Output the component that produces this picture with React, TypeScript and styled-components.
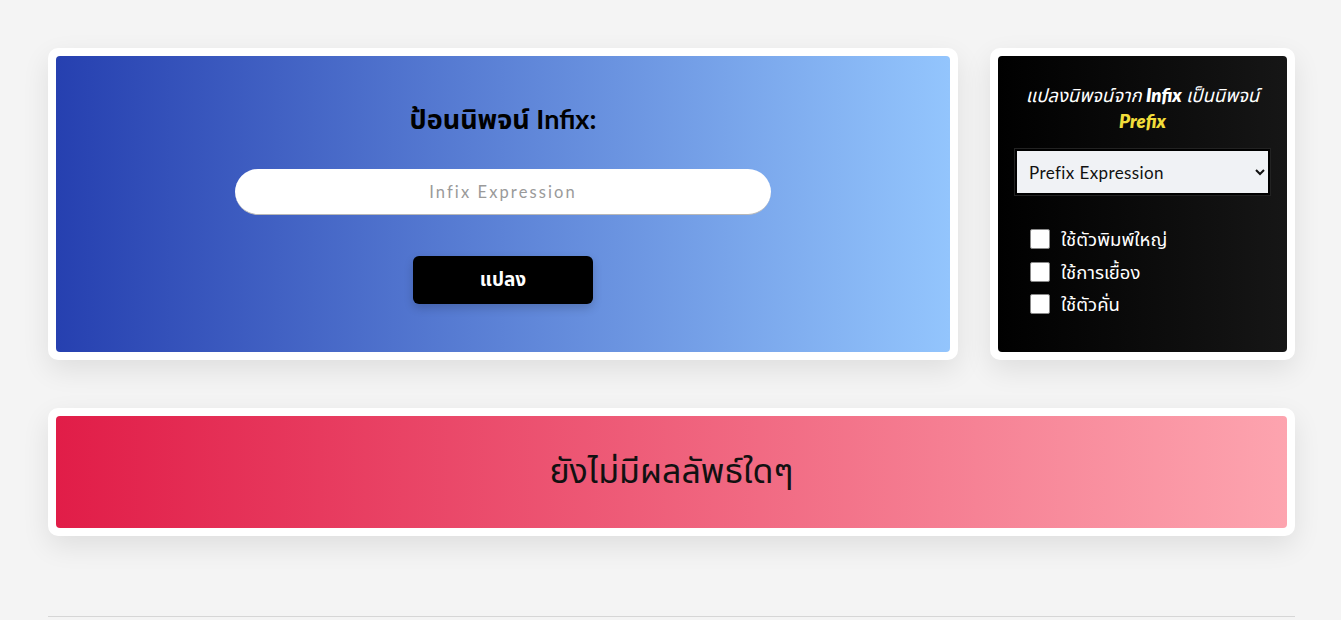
import React, { useState } from 'react';
import styled, { createGlobalStyle } from 'styled-components';

const FONT = `'Lato', 'Noto Sans Thai', 'Noto Sans', sans-serif`;

const GlobalStyle = createGlobalStyle`
  html, body {
    margin: 0;
    padding: 0;
    background: #f4f4f4;
    font-family: ${FONT};
  }
  * {
    box-sizing: border-box;
  }
`;

const Page = styled.div`
  padding: 48px 46px 0 48px;
`;

const TopRow = styled.div`
  display: grid;
  grid-template-columns: 910px 1fr;
  gap: 32px;
`;

const Card = styled.section`
  display: flex;
  background: #fff;
  padding: 8px;
  border-radius: 10px;
  box-shadow: 0 10px 28px rgba(0, 0, 0, 0.09);
`;

const Surface = styled.div<{ $bg: string }>`
  flex: 1;
  background: ${(p) => p.$bg};
  border-radius: 4px;
`;

const InputPanel = styled(Surface)`
  display: flex;
  flex-direction: column;
  align-items: center;
  padding: 45px 0 48px;
`;

const Title = styled.h2`
  margin: 0;
  font-size: 27px;
  line-height: 35px;
  font-weight: 700;
  color: #000;
`;

const ExprInput = styled.input`
  margin-top: 33px;
  width: 536px;
  height: 46px;
  border: none;
  border-bottom: 1px solid #b8b8b8;
  border-radius: 23px;
  background: #fff;
  font-family: ${FONT};
  font-size: 16.5px;
  letter-spacing: 2.1px;
  text-align: center;
  outline: none;
  &::placeholder {
    color: #9a9a9a;
  }
`;

const ConvertButton = styled.button`
  margin-top: 41px;
  width: 180px;
  height: 48px;
  border: none;
  border-radius: 6px;
  background: #000;
  color: #fff;
  font-family: ${FONT};
  font-size: 19px;
  font-weight: 700;
  box-shadow: 0 4px 10px rgba(0, 0, 0, 0.18);
  cursor: pointer;
`;

const OptionsPanel = styled(Surface)`
  padding: 26px 17px 38px;
  color: #fff;
`;

const Caption = styled.p`
  margin: 0;
  text-align: center;
  font-style: italic;
  font-size: 18.5px;
  line-height: 26px;
  b {
    font-weight: 800;
  }
`;

const Highlight = styled.b`
  color: #f2dd3a;
`;

const ModeSelect = styled.select`
  margin-top: 15px;
  width: 100%;
  height: 46px;
  padding: 0 8px;
  border: 2px solid #000;
  outline: 1px solid #222;
  background: #f0f2f5;
  font-family: ${FONT};
  font-size: 17px;
  letter-spacing: 0.4px;
  color: #111;
`;

const OptionList = styled.div`
  margin-top: 34px;
  padding-left: 15px;
  display: flex;
  flex-direction: column;
  gap: 12.5px;
`;

const OptionRow = styled.label`
  display: flex;
  align-items: center;
  gap: 11px;
  font-size: 18.5px;
  line-height: 20px;
  cursor: pointer;
  input {
    margin: 0;
    width: 20px;
    height: 20px;
    appearance: none;
    background: #fff;
    border: 1px solid #888;
    border-radius: 2px;
  }
`;

const ResultRow = styled.div`
  margin-top: 48px;
`;

const ResultPanel = styled(Surface)`
  height: 112px;
  display: flex;
  align-items: center;
  justify-content: center;
  font-size: 34px;
  color: #111;
`;

const Divider = styled.hr`
  margin: 80px 0 0;
  border: none;
  border-top: 1px solid #d6d6d6;
`;

const options = ['ใช้ตัวพิมพ์ใหญ่', 'ใช้การเยื้อง', 'ใช้ตัวคั่น'];

export default function App() {
  const [expr, setExpr] = useState('');

  return (
    <>
      <GlobalStyle />
      <Page>
        <TopRow>
          <Card>
            <InputPanel $bg="linear-gradient(to right, #2640b0, #93c5fd)">
              <Title>ป้อนนิพจน์ Infix:</Title>
              <ExprInput
                placeholder="Infix Expression"
                value={expr}
                onChange={(e) => setExpr(e.target.value)}
              />
              <ConvertButton>แปลง</ConvertButton>
            </InputPanel>
          </Card>
          <Card>
            <OptionsPanel $bg="linear-gradient(to right, #000, #161616)">
              <Caption>
                แปลงนิพจน์จาก <b>Infix</b> เป็นนิพจน์
                <br />
                <Highlight>Prefix</Highlight>
              </Caption>
              <ModeSelect defaultValue="prefix">
                <option value="prefix">Prefix Expression</option>
                <option value="postfix">Postfix Expression</option>
              </ModeSelect>
              <OptionList>
                {options.map((o) => (
                  <OptionRow key={o}>
                    <input type="checkbox" />
                    {o}
                  </OptionRow>
                ))}
              </OptionList>
            </OptionsPanel>
          </Card>
        </TopRow>
        <ResultRow>
          <Card>
            <ResultPanel $bg="linear-gradient(to right, #e11d48, #fda4af)">
              ยังไม่มีผลลัพธ์ใดๆ
            </ResultPanel>
          </Card>
        </ResultRow>
        <Divider />
      </Page>
    </>
  );
}
